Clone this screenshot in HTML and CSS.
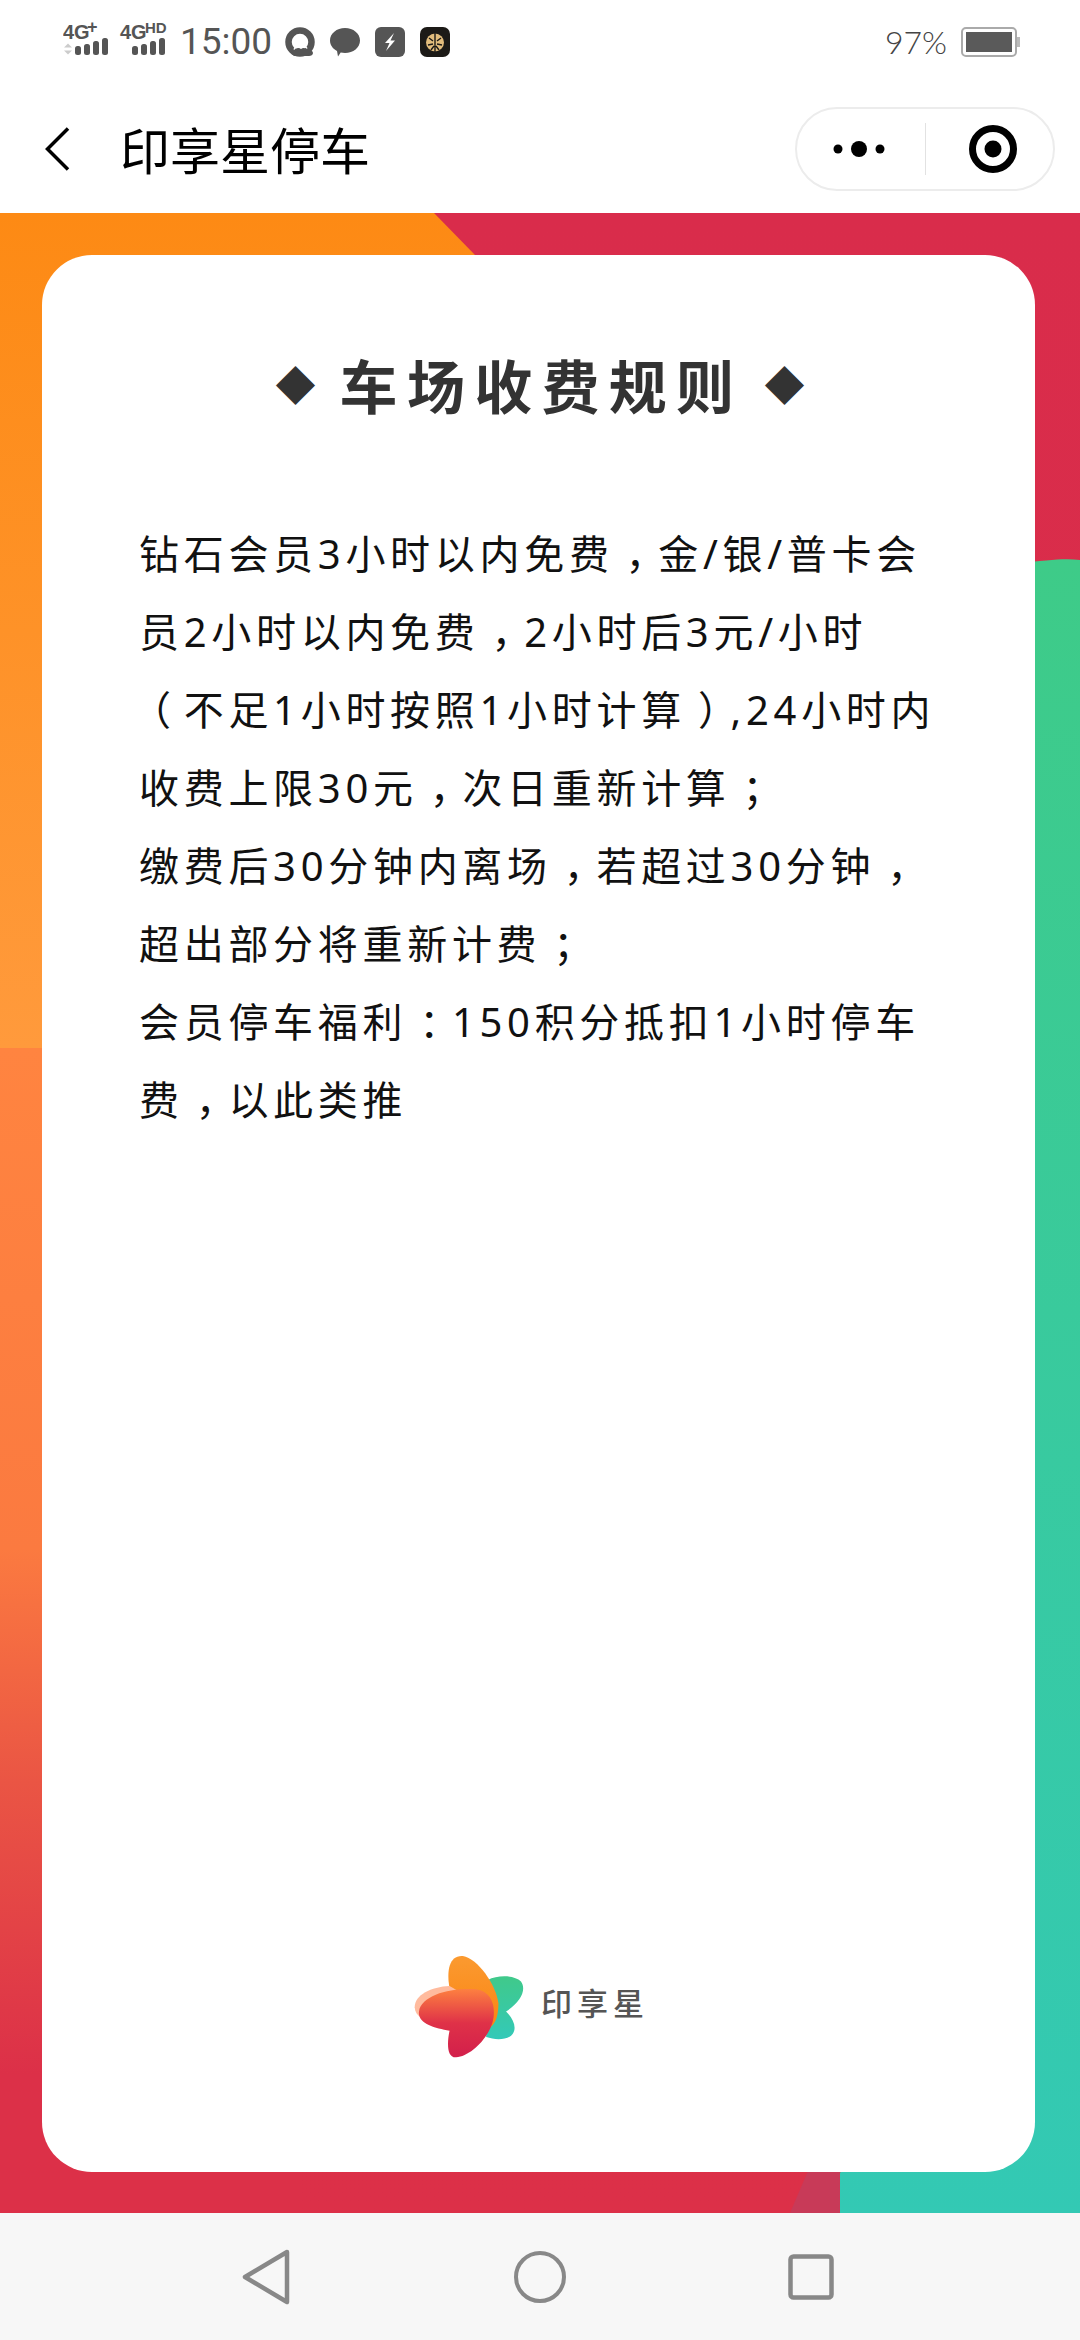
FILE: index.html
```html
<!DOCTYPE html>
<html lang="zh-CN">
<head>
    <meta charset="UTF-8">
    <meta name="viewport" content="width=device-width, initial-scale=1.0">
    <title>印享星停车</title>
    <link rel="stylesheet" href="styles.css">
</head>
<body>
    <div class="phone">
        <div class="status-bar">
            <svg class="signal" width="106" height="40" viewBox="0 -6 106 40">
                <text x="0" y="16" class="sig-big">4G</text>
                <text x="24" y="10" class="sig-small">+</text>
                <path d="M5 20.500l4 4h-8zM5 31.500l4-4h-8z" fill="#ccc"/>
                <g fill="#555">
                    <rect x="12" y="23" width="6" height="9" rx="2.500"/>
                    <rect x="21" y="21" width="6" height="11" rx="2.500"/>
                    <rect x="30" y="18" width="6" height="14" rx="2.500"/>
                    <rect x="39" y="15" width="6" height="17" rx="2.500"/>
                </g>
                <text x="57" y="16" class="sig-big">4G</text>
                <text x="82" y="10" class="sig-hd">HD</text>
                <g fill="#555">
                    <rect x="69" y="23" width="6" height="9" rx="2.500"/>
                    <rect x="78" y="21" width="6" height="11" rx="2.500"/>
                    <rect x="87" y="18" width="6" height="14" rx="2.500"/>
                    <rect x="96" y="15" width="6" height="17" rx="2.500"/>
                </g>
            </svg>
            <span class="time">15:00</span>
            <div class="notify-icons">
                <svg width="30" height="30" viewBox="0 0 30 30">
                    <circle cx="15" cy="15" r="11.500" fill="none" stroke="#555" stroke-width="6.500"/>
                    <path d="M10 29c-3 0-4-4-1-5 1-3 5-4 7-2 2-2 5-1 6 1 3-1 6 1 6 3 0 2-2 3-4 3z" fill="#555"/>
                    <path d="M9 22.500c1-3 5-4 7-2 2-2 5-1 6 1" fill="none" stroke="#fff" stroke-width="1.500"/>
                </svg>
                <svg width="30" height="30" viewBox="0 0 30 30">
                    <path d="M15 1c8.300 0 15 5.500 15 12.500S23.300 26 15 26c-1.500 0-3-.2-4.300-.5L8 29.500 7 24C2.800 21.800 0 18 0 13.500 0 6.500 6.700 1 15 1z" fill="#555"/>
                </svg>
                <svg width="30" height="30" viewBox="0 0 30 30">
                    <rect width="30" height="30" rx="6" fill="#555"/>
                    <path d="M19 6l-9 10h4.500L11 24l9-10.500h-4.500z" fill="#fff"/>
                </svg>
                <svg width="30" height="30" viewBox="0 0 30 30">
                    <rect width="30" height="30" rx="7" fill="#1c1a17"/>
                    <circle cx="15" cy="15.500" r="9" fill="#e3bd7d"/>
                    <path d="M15 4v22M9 11l4 3M21 11l-4 3M8 18l5-1M22 18l-5-1M11 23l3-4M19 23l-3-4" stroke="#1c1a17" stroke-width="1.400" fill="none"/>
                </svg>
            </div>
            <div class="status-right">
                <span class="battery-text">97%</span>
                <div class="battery">
                    <div class="battery-fill"></div>
                </div>
                <div class="battery-cap"></div>
            </div>
        </div>

        <div class="nav-bar">
            <svg class="back" width="25" height="44" viewBox="0 0 25 44">
                <path d="M23 1.500L2.500 22 23 42.500" fill="none" stroke="#000" stroke-width="3.500"/>
            </svg>
            <div class="nav-title">印享星停车</div>
            <div class="capsule">
                <svg class="capsule-btn" width="60" height="20" viewBox="0 0 60 20">
                    <circle cx="9" cy="10" r="4.500"/>
                    <circle cx="30" cy="10" r="8"/>
                    <circle cx="51" cy="10" r="4.500"/>
                </svg>
                <div class="capsule-line"></div>
                <svg class="capsule-btn" width="48" height="48" viewBox="0 0 48 48">
                    <circle cx="24" cy="24" r="20.500" fill="none" stroke="#000" stroke-width="7"/>
                    <circle cx="24" cy="24" r="8.500"/>
                </svg>
            </div>
        </div>

        <div class="main">
            <svg class="main-bg" width="1080" height="2000" viewBox="0 0 1080 2000">
                <defs>
                    <linearGradient id="bgRed" x1="0" y1="0" x2="0" y2="1">
                        <stop offset="0" stop-color="#d92c4b"/>
                        <stop offset="1" stop-color="#dc3048"/>
                    </linearGradient>
                    <linearGradient id="bgOrange" x1="0" y1="0" x2="0" y2="1">
                        <stop offset="0" stop-color="#fd8a14"/>
                        <stop offset="1" stop-color="#ff9a3c"/>
                    </linearGradient>
                    <linearGradient id="bgCoral" x1="0" y1="0" x2="0" y2="1">
                        <stop offset="0" stop-color="#ff8440"/>
                        <stop offset="0.430" stop-color="#fb7a40"/>
                        <stop offset="0.630" stop-color="#ea5544"/>
                        <stop offset="0.880" stop-color="#dc3048"/>
                        <stop offset="1" stop-color="#dc3048"/>
                    </linearGradient>
                    <linearGradient id="bgGreen" x1="0" y1="0" x2="0" y2="1">
                        <stop offset="0" stop-color="#3ecb88"/>
                        <stop offset="1" stop-color="#33c9b4"/>
                    </linearGradient>
                </defs>
                <rect width="1080" height="2000" fill="url(#bgRed)"/>
                <path d="M0 0H434L475 42 520 400 300 835H0z" fill="url(#bgOrange)"/>
                <path d="M0 835H300V2000H0z" fill="url(#bgCoral)"/>
                <path d="M808 1958H840V2000H790z" fill="#c83a58"/>
                <path d="M1080 347C1060 345 1045 348 1000 352V1700L840 1960V2000H1080z" fill="url(#bgGreen)"/>
            </svg>

            <div class="card">
                <h1 class="rule-title">
                    <span class="mark">◆</span>
                    <span>车场收费规则</span>
                    <span class="mark">◆</span>
                </h1>
                <div class="rule-text">
                    <p>钻石会员3小时以内免费<span class="punct">，</span>金/银/普卡会员2小时以内免费<span class="punct">，</span>2小时后3元/小时<span class="punct-open">（</span>不足1小时按照1小时计算<span class="punct">）</span>,24小时内收费上限30元<span class="punct">，</span>次日重新计算<span class="punct">；</span></p>
                    <p>缴费后30分钟内离场<span class="punct">，</span>若超过30分钟<span class="punct">，</span>超出部分将重新计费<span class="punct">；</span></p>
                    <p>会员停车福利<span class="punct">：</span>150积分抵扣1小时停车费<span class="punct">，</span>以此类推</p>
                </div>
                <div class="brand">
                    <svg width="113" height="107" viewBox="95 70 340 320">
                        <defs>
                            <linearGradient id="logoGreen" x1="0" y1="0" x2="0" y2="1">
                                <stop offset="0" stop-color="#40c98a"/>
                                <stop offset="1" stop-color="#33c9b8"/>
                            </linearGradient>
                            <linearGradient id="logoOrange" x1="0" y1="0" x2="0" y2="1">
                                <stop offset="0" stop-color="#fb9a30"/>
                                <stop offset="1" stop-color="#fa8412"/>
                            </linearGradient>
                            <linearGradient id="logoRed" x1="0" y1="0" x2="0" y2="1">
                                <stop offset="0" stop-color="#fd8040"/>
                                <stop offset="0.500" stop-color="#df3148"/>
                                <stop offset="1" stop-color="#d21f4b"/>
                            </linearGradient>
                        </defs>
                        <path d="M320 150C350 135 400 135 420 155 437 180 420 215 375 245 400 270 410 300 390 318 370 332 340 330 315 322z" fill="url(#logoGreen)"/>
                        <path d="M205 175C195 120 205 75 245 78 290 85 345 165 352 220 352 280 330 300 300 300L220 250z" fill="url(#logoOrange)"/>
                        <path d="M205 168C150 170 100 195 100 232 102 262 130 270 160 275L260 200z" fill="#ffbb9e"/>
                        <path d="M113 245C120 195 210 172 285 178 335 185 345 235 335 275 320 330 265 380 225 383 195 385 198 335 205 303 160 295 108 282 113 245z" fill="url(#logoRed)"/>
                    </svg>
                    <span class="brand-name">印享星</span>
                </div>
            </div>
        </div>

        <div class="bottom-bar">
            <svg width="50" height="56" viewBox="0 0 50 56">
                <path d="M46 3L4 28l42 25z" fill="none" stroke="#888" stroke-width="4.500" stroke-linejoin="round"/>
            </svg>
            <svg width="52" height="52" viewBox="0 0 52 52">
                <circle cx="26" cy="26" r="24" fill="none" stroke="#888" stroke-width="4"/>
            </svg>
            <svg width="46" height="46" viewBox="0 0 46 46">
                <rect x="2.500" y="2.500" width="41" height="41" rx="3" fill="none" stroke="#888" stroke-width="4.500"/>
            </svg>
        </div>
    </div>
</body>
</html>
```

FILE: styles.css
```css
* {
    box-sizing: border-box;
}

body {
    margin: 0;
    font-family: "Noto Sans", "Noto Sans CJK SC", sans-serif;
    background-color: #fff;
}

.phone {
    width: 1080px;
    height: 2340px;
    display: flex;
    flex-direction: column;
    overflow: hidden;
}

.status-bar {
    height: 95px;
    display: flex;
    align-items: center;
    padding: 0 60px 11px 63px;
    color: #555;
}

.signal {
    margin-top: -10px;
}

.sig-big {
    font-family: "Liberation Sans", sans-serif;
    font-weight: bold;
    font-size: 20px;
    fill: #555;
}

.sig-small {
    font-family: "Liberation Sans", sans-serif;
    font-weight: bold;
    font-size: 18px;
    fill: #555;
}

.sig-hd {
    font-family: "Liberation Sans", sans-serif;
    font-weight: bold;
    font-size: 15px;
    fill: #555;
}

.time {
    font-family: Roboto, sans-serif;
    font-size: 37px;
    line-height: 40px;
    margin-left: 11px;
}

.notify-icons {
    display: flex;
    gap: 15px;
    margin-left: 13px;
}

.notify-icons svg {
    display: block;
}

.status-right {
    margin-left: auto;
    display: flex;
    align-items: center;
}

.battery-text {
    font-family: Lato, sans-serif;
    font-size: 32px;
    font-weight: 300;
    line-height: 36px;
    margin-right: 14px;
    color: #444;
}

.battery {
    width: 56px;
    height: 30px;
    border: 2px solid #aaa;
    border-radius: 5px;
    padding: 3px;
}

.battery-fill {
    height: 100%;
    background-color: #5a5a5a;
}

.battery-cap {
    width: 3px;
    height: 10px;
    background-color: #bbb;
}

.nav-bar {
    height: 118px;
    display: flex;
    align-items: center;
    padding: 0 25px 10px 45px;
    background-color: #fff;
}

.back {
    display: block;
}

.nav-title {
    margin: 0 0 3px 50px;
    font-family: "Noto Sans CJK SC", sans-serif;
    font-size: 50px;
    color: #000;
    line-height: 60px;
}

.capsule {
    margin-left: auto;
    width: 260px;
    height: 84px;
    display: flex;
    align-items: center;
    border: 2px solid #ececec;
    border-radius: 42px;
    background-color: #fff;
}

.capsule-btn {
    display: block;
}

.capsule-btn:first-child {
    margin-left: 32px;
}

.capsule-line {
    width: 1px;
    height: 52px;
    background-color: #e2e2e2;
    margin: 0 43px 0 36px;
}

.main {
    position: relative;
    height: 2000px;
    padding: 42px 45px 41px 42px;
    display: flex;
}

.main-bg {
    position: absolute;
    left: 0;
    top: 0;
}

.card {
    position: relative;
    flex: 1;
    display: flex;
    flex-direction: column;
    background-color: #fff;
    border-radius: 50px;
    padding: 91px 90px 112px 97px;
}

.rule-title {
    margin: 0 0 0 -4px;
    display: flex;
    justify-content: center;
    align-items: center;
    gap: 24px;
    font-family: "Noto Sans CJK SC", sans-serif;
    font-size: 58px;
    line-height: 76px;
    font-weight: bold;
    letter-spacing: 9.300px;
    color: #333;
}

.mark {
    font-size: 40px;
    letter-spacing: 0;
}

.mark:last-child {
    margin-left: -3px;
}

.rule-text {
    margin-top: 93px;
    font-size: 40px;
    line-height: 78px;
    letter-spacing: 4.700px;
    color: #111;
}

.rule-text p {
    margin: 0;
}

/* the reference centres its fullwidth punctuation in the em box */
.punct {
    margin-left: 0.3em;
    margin-right: -0.3em;
}

.punct-open {
    margin-left: -0.2em;
    margin-right: 0.2em;
}

.brand {
    margin-top: auto;
    display: flex;
    align-items: center;
    justify-content: center;
    padding-right: 22px;
}

.brand svg {
    display: block;
}

.brand-name {
    margin: 0 0 10px 15px;
    font-size: 31px;
    font-weight: 500;
    letter-spacing: 5px;
    color: #555;
    font-family: "Noto Sans CJK SC", sans-serif;
}

.bottom-bar {
    flex: 1;
    display: flex;
    align-items: center;
    justify-content: space-between;
    padding: 0 246px 0 241px;
    background-color: #f7f7f7;
}
```
